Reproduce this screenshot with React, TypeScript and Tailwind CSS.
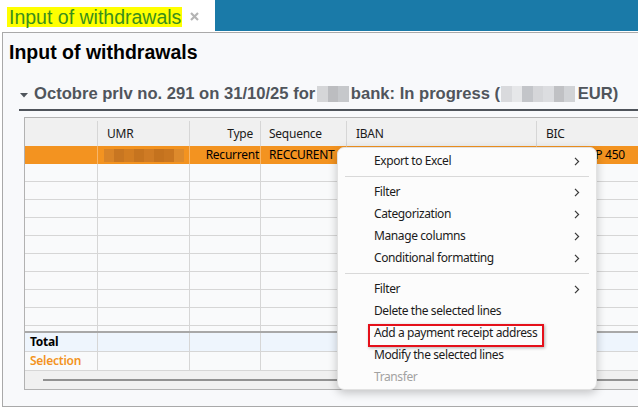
import React from "react";

const colW = ["w-[73px]", "w-[92px]", "w-[71px]", "w-[86px]", "w-[190px]", "w-[220px]"];

function Row({
  className,
  cells,
  line = "border-[#d6d6d6]",
}: {
  className: string;
  cells?: React.ReactNode[];
  line?: string;
}) {
  return (
    <div className={`flex ${className}`}>
      {colW.map((w, i) => (
        <div key={i} className={`${w} shrink-0 h-full border-r ${line} flex items-center overflow-hidden whitespace-nowrap`}>
          {cells?.[i]}
        </div>
      ))}
    </div>
  );
}

function Blur({ shades, h = "h-[16px]", w = "w-[10px]", className = "" }: { shades: string[]; h?: string; w?: string; className?: string }) {
  return (
    <span className={`inline-flex ${h} align-middle ${className}`}>
      {shades.map((s, i) => (
        <span key={i} className={`${w} h-full ${s}`} />
      ))}
    </span>
  );
}

function Chevron() {
  return (
    <svg width="6" height="9" viewBox="0 0 6 9" className="absolute right-[16px] top-[7px]">
      <path d="M1 0.8 L4.6 4.5 L1 8.2" fill="none" stroke="#3a3a3a" strokeWidth="1.2" />
    </svg>
  );
}

type Item = { label?: string; sub?: boolean; sep?: boolean; disabled?: boolean; boxed?: boolean };

const items: Item[] = [
  { label: "Export to Excel", sub: true },
  { sep: true },
  { label: "Filter", sub: true },
  { label: "Categorization", sub: true },
  { label: "Manage columns", sub: true },
  { label: "Conditional formatting", sub: true },
  { sep: true },
  { label: "Filter", sub: true },
  { label: "Delete the selected lines" },
  { label: "Add a payment receipt address", boxed: true },
  { label: "Modify the selected lines" },
  { label: "Transfer", disabled: true },
];

export default function App() {
  const emptyRows = Array.from({ length: 10 });

  return (
    <div className="w-[638px] h-[407px] bg-white overflow-hidden relative font-['Liberation_Sans',Arial,sans-serif]">
      {/* tab strip */}
      <div className="flex h-[31px]">
        <div className="w-[215px] shrink-0 flex items-start pl-[7px] pt-[7px]">
          <span className="bg-[#ffff00] text-[#3b8f1c] text-[19.5px] leading-[20px] h-[20px] pl-[2px] pr-[1px]">
            Input of withdrawals
          </span>
          <svg width="9" height="9" viewBox="0 0 9 9" className="ml-[8px] mt-[5px]">
            <path d="M1 1 L8 8 M8 1 L1 8" stroke="#b4b4b4" strokeWidth="2.2" />
          </svg>
        </div>
        <div className="flex-1 bg-[#1a7aa8]" />
      </div>

      {/* panel */}
      <div className="mt-[1px] ml-[2px] w-[700px] h-[375px] border border-[#a9a9a9] bg-[#f8f9fb] pt-[8px]">
        <h1 className="pl-[6px] text-[19.5px] leading-[22px] font-bold text-black">Input of withdrawals</h1>

        <div className="mt-[21px] ml-[16px] border-b-2 border-[#4f545b] pb-[5px] flex items-center text-[#50555c] text-[16.6px] leading-[20px] font-bold whitespace-nowrap">
          <svg width="8" height="5" viewBox="0 0 8 5" className="ml-[1px] mr-[6px] mt-[3px]">
            <path d="M0 0 H8 L4 4.5 Z" fill="#50555c" />
          </svg>
          <span>Octobre prlv no. 291 on 31/10/25 for</span>
          <Blur className="mx-[2px]" w="w-[10.5px]" shades={["bg-[#d5d6d8]", "bg-[#bcbdc0]", "bg-[#c6c8cb]"]} />
          <span>bank: In progress (</span>
          <Blur
            className="ml-[1px]"
            w="w-[10.5px]"
            shades={[
              "bg-[#d9dadd]",
              "bg-[#e6e7e9]",
              "bg-[#c3c5c9]",
              "bg-[#d5d6d9]",
              "bg-[#dcdde0]",
              "bg-[#c0c1c4]",
              "bg-[#d1d3d6]",
            ]}
          />
          <span className="ml-[3px]">EUR)</span>
        </div>

        {/* grid */}
        <div className="mt-[6px] ml-[21px] w-[740px] border border-[#b2b2b2] bg-[#f9fafb] font-['Noto_Sans',sans-serif] text-[12px] tracking-[-0.25px] text-[#1a1a1a]">
          <Row
            className="h-[28px] bg-[#f0f0f0] pt-[3px]"
            cells={[
              null,
              <span className="pl-[9px]">UMR</span>,
              <span className="w-full text-right pr-[7px]">Type</span>,
              <span className="pl-[8px]">Sequence</span>,
              <span className="pl-[9px]">IBAN</span>,
              <span className="pl-[9px]">BIC</span>,
            ]}
          />
          <div className="h-[185px] overflow-hidden">
            <Row
              className="h-[18px] bg-[#f39320]"
              line="border-[#f7b66a]"
              cells={[
                null,
                <span className="pl-[6px] flex">
                  <Blur
                    h="h-[13px]"
                    shades={[
                      "bg-[#d98427]",
                      "bg-[#c87621]",
                      "bg-[#d27d22]",
                      "bg-[#c6741f]",
                      "bg-[#cf7b24]",
                      "bg-[#c4721e]",
                      "bg-[#c97620]",
                      "bg-[#dd8a2c]",
                    ]}
                  />
                </span>,
                <span className="w-full text-right pr-[1px] text-black">Recurrent</span>,
                <span className="pl-[8px] text-black">RECCURENT</span>,
                null,
                <span className="pl-[9px] text-black">CCBPFRPP 450</span>,
              ]}
            />
            {emptyRows.map((_, i) => (
              <div key={i} className="border-b border-[#d6d6d6]">
                <Row className="h-[17px]" />
              </div>
            ))}
          </div>
          <div className="border-t-2 border-[#a8a8a8]">
            <div className="border-b border-[#d6d6d6] bg-[#eef5fd]">
              <Row className="h-[18px]" cells={[<span className="pl-[5px] font-bold text-black">Total</span>]} />
            </div>
            <div className="border-b border-[#d6d6d6]">
              <Row
                className="h-[18px]"
                cells={[<span className="pl-[5px] font-semibold text-[#f39321]">Selection</span>]}
              />
            </div>
            <div className="h-[18px] bg-[#f0f0f0] flex items-center pl-[18px]">
              <div className="h-[2px] w-full bg-[#919191]" />
            </div>
          </div>
        </div>
      </div>

      {/* context menu */}
      <div className="absolute left-[337px] top-[147px] w-[260px] h-[243px] bg-[#fcfcfc] rounded-[7px] border border-[#e2e2e2] shadow-[0_3px_10px_rgba(0,0,0,0.22)] pt-[2px] font-['Noto_Sans',sans-serif] text-[12px] tracking-[-0.4px] text-[#1b1b1b]">
        {items.map((it, i) =>
          it.sep ? (
            <div key={i} className="h-[9px] flex items-center px-[7px]">
              <div className="h-px w-full bg-[#d9d9d9]" />
            </div>
          ) : (
            <div key={i} className="relative h-[22px] flex items-center pl-[36px] whitespace-nowrap">
              <span className={it.disabled ? "text-[#a2a2a2]" : ""}>{it.label}</span>
              {it.sub && <Chevron />}
              {it.boxed && (
                <div className="absolute left-[30px] top-[2px] w-[176px] h-[23px] border-2 border-[#e5101a] shadow-[1px_1px_3px_rgba(0,0,0,0.3)]" />
              )}
            </div>
          )
        )}
      </div>
    </div>
  );
}
